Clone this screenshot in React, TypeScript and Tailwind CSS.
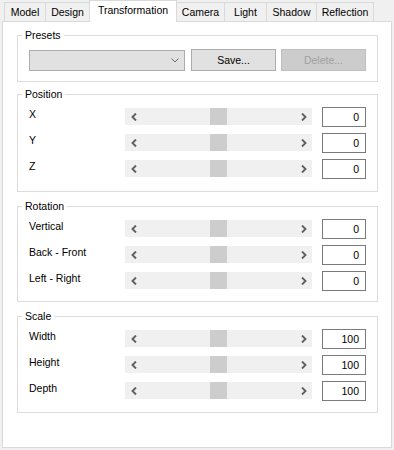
import React from 'react';

/**
 * Transformation settings panel (WinForms-style tab control)
 * Tabs on top, then group boxes: Presets, Position, Rotation, Scale
 */

const TABS = [
  { label: 'Model', width: 'w-[42px]' },
  { label: 'Design', width: 'w-[45px]' },
  { label: 'Transformation', width: 'w-[88px]', active: true },
  { label: 'Camera', width: 'w-[49px]' },
  { label: 'Light', width: 'w-[43px]' },
  { label: 'Shadow', width: 'w-[51px]' },
  { label: 'Reflection', width: 'w-[58px]' },
];

interface Row {
  label: string;
  value: string;
}

const POSITION: Row[] = [
  { label: 'X', value: '0' },
  { label: 'Y', value: '0' },
  { label: 'Z', value: '0' },
];

const ROTATION: Row[] = [
  { label: 'Vertical', value: '0' },
  { label: 'Back - Front', value: '0' },
  { label: 'Left - Right', value: '0' },
];

const SCALE: Row[] = [
  { label: 'Width', value: '100' },
  { label: 'Height', value: '100' },
  { label: 'Depth', value: '100' },
];

function Arrow({ dir }: { dir: 'left' | 'right' }) {
  return (
    <svg width="6" height="8" viewBox="0 0 6 8" className="block">
      <polyline
        points={dir === 'left' ? '5,0.5 1.5,4 5,7.5' : '1,0.5 4.5,4 1,7.5'}
        fill="none"
        stroke="#606060"
        strokeWidth="1.9"
      />
    </svg>
  );
}

// horizontal scrollbar used as a slider, thumb in the middle
function ScrollBar() {
  return (
    <div className="mt-[1px] flex h-[17px] w-[187px] bg-[#f0f0f0]">
      <div className="flex w-[17px] items-center justify-center">
        <Arrow dir="left" />
      </div>
      <div className="flex flex-1 justify-center">
        <div className="h-full w-[17px] bg-[#cdcdcd]" />
      </div>
      <div className="flex w-[17px] items-center justify-center">
        <Arrow dir="right" />
      </div>
    </div>
  );
}

function Group({
  title,
  className,
  children,
}: {
  title: string;
  className: string;
  children: React.ReactNode;
}) {
  return (
    <div
      className={`relative ml-[14px] w-[361px] border border-[#dcdcdc] ${className}`}
    >
      <span className="absolute left-[4px] top-[-8px] bg-white px-[3px] leading-[14px] text-black">
        {title}
      </span>
      {children}
    </div>
  );
}

function SliderRows({ rows }: { rows: Row[] }) {
  return (
    <div className="flex flex-col gap-[6px] pl-[11px] pt-[12px]">
      {rows.map((r) => (
        <div key={r.label} className="flex h-[20px] items-start">
          <span className="w-[96px] leading-[14px] text-black">{r.label}</span>
          <ScrollBar />
          <div className="ml-[10px] h-[20px] w-[44px] border border-[#7a7a7a] bg-white pr-[6px] text-right leading-[18px] text-black">
            {r.value}
          </div>
        </div>
      ))}
    </div>
  );
}

export default function App() {
  return (
    <div className="h-[450px] w-[394px] bg-[#f0f0f0] px-[2px] font-['Liberation_Sans',Arial,sans-serif] text-[10.5px]">
      {/* Tab strip */}
      <div className="flex h-[21px] items-end pl-[2px]">
        {TABS.map((t, i) =>
          t.active ? (
            <div
              key={t.label}
              className={`relative z-10 -mb-px h-[22px] ${t.width} ${i > 0 ? '-ml-px' : ''} border-x border-t border-[#d9d9d9] bg-white pt-[2px] text-center leading-[14px] text-black`}
            >
              {t.label}
            </div>
          ) : (
            <div
              key={t.label}
              className={`h-[19px] ${t.width} ${i > 0 ? '-ml-px' : ''} border-x border-t border-[#d9d9d9] bg-[#f0f0f0] pt-[2px] text-center leading-[14px] text-black`}
            >
              {t.label}
            </div>
          )
        )}
      </div>

      {/* Tab page */}
      <div className="h-[427px] border border-[#d9d9d9] bg-white">
        <Group title="Presets" className="mt-[13px] h-[47px]">
          <div className="flex items-start pl-[11px] pt-[13px]">
            <div className="mt-[1px] flex h-[21px] w-[156px] items-center justify-end border border-[#adadad] bg-[#e1e1e1] pr-[5px]">
              <svg width="8" height="5" viewBox="0 0 8 5" className="block">
                <polyline
                  points="0.5,0.5 4,4 7.5,0.5"
                  fill="none"
                  stroke="#6a6a6a"
                  strokeWidth="1"
                />
              </svg>
            </div>
            <button className="ml-[6px] h-[22px] w-[85px] border border-[#adadad] bg-[#e1e1e1] text-center leading-[20px] text-black">
              Save...
            </button>
            <button
              disabled
              className="ml-[5px] h-[22px] w-[85px] border border-[#bfbfbf] bg-[#cccccc] text-center leading-[20px] text-[#a0a0a0]"
            >
              Delete...
            </button>
          </div>
        </Group>

        <Group title="Position" className="mt-[12px] h-[98px]">
          <SliderRows rows={POSITION} />
        </Group>

        <Group title="Rotation" className="mt-[14px] h-[96px]">
          <SliderRows rows={ROTATION} />
        </Group>

        <Group title="Scale" className="mt-[14px] h-[97px]">
          <SliderRows rows={SCALE} />
        </Group>
      </div>
    </div>
  );
}
